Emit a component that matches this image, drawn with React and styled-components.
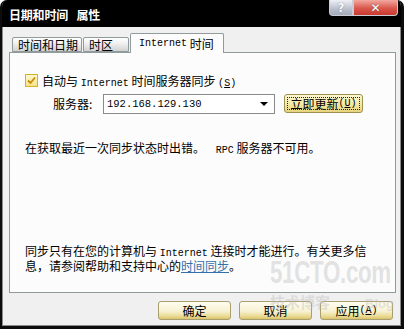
import React from "react";
import styled, { createGlobalStyle } from "styled-components";

const GlobalStyle = createGlobalStyle`
  html, body {
    margin: 0;
    padding: 0;
    background: #ffffff;
  }
  body {
    font-family: "Noto Sans CJK SC", "Liberation Sans", sans-serif;
    font-size: 12px;
    color: #000;
  }
`;

const Window = styled.div`
  position: relative;
  width: 404px;
  height: 329px;
  box-sizing: border-box;
  display: flex;
  flex-direction: column;
  background: #f0f0f0;
  border: 2px solid #0c0c0c;
  border-right-width: 3px;
  border-bottom-width: 3px;
  border-top: none;
  border-radius: 7px 7px 0 0;
  box-shadow: inset 1px 0 0 #8c8c8c, inset -1px -1px 0 #8c8c8c;
  overflow: hidden;
`;

const TitleBar = styled.div`
  height: 27px;
  flex-shrink: 0;
  display: flex;
  align-items: flex-start;
  background: #000;
  padding-left: 8px;
  margin: 0 -1px;
`;

const Title = styled.div`
  color: #fff;
  font-weight: 700;
  font-size: 12px;
  line-height: 12px;
  margin-top: 9px;
  letter-spacing: -0.2px;
  word-spacing: 6px;
`;

const CaptionButtons = styled.div`
  margin-left: auto;
  margin-right: 4px;
  display: flex;
`;

const CaptionButton = styled.div`
  width: ${(p) => p.w}px;
  height: 16px;
  box-sizing: border-box;
  display: flex;
  align-items: center;
  justify-content: center;
  color: #fff;
  font-family: "DejaVu Sans", sans-serif;
  font-weight: 700;
  font-size: 12px;
  border: 1px solid #c9ccd4;
  border-top: none;
  background: ${(p) =>
    p.close
      ? "linear-gradient(#f2a8a0, #d9574c 55%, #c8392f)"
      : "linear-gradient(#eef0f5, #b8bfcc 60%, #a3abbb)"};
  border-radius: ${(p) => (p.close ? "0 0 4px 0" : "0 0 0 4px")};
  text-shadow: 0 0 1px #555;
`;

const Body = styled.div`
  flex: 1;
  display: flex;
  flex-direction: column;
  padding: 6px 5px 0 7px;
`;

const TabStrip = styled.div`
  display: flex;
  align-items: flex-end;
  height: 19px;
  padding-left: 3px;
  position: relative;
  z-index: 1;
`;

const Tab = styled.div`
  box-sizing: border-box;
  width: ${(p) => p.w}px;
  height: ${(p) => (p.active ? 20 : 15)}px;
  margin-right: 1px;
  margin-bottom: ${(p) => (p.active ? -1 : 0)}px;
  padding-left: ${(p) => (p.active ? 8 : 5)}px;
  display: flex;
  align-items: ${(p) => (p.active ? "flex-start" : "center")};
  padding-top: ${(p) => (p.active ? 3 : 0)}px;
  border: 1px solid #919b9c;
  border-bottom: ${(p) => (p.active ? "none" : "1px solid #919b9c")};
  border-radius: 2px 2px 0 0;
  background: ${(p) =>
    p.active ? "#fcfcfc" : "linear-gradient(#ffffff, #f1f1f1 40%, #d2d2d2)"};
  font-size: 12px;
  line-height: 13px;
  white-space: nowrap;
`;

const Latin = styled.span`
  font-family: "Liberation Mono", monospace;
  font-size: 10px;
`;

const Panel = styled.div`
  width: 387px;
  height: 241px;
  box-sizing: border-box;
  background: #fcfcfc;
  border: 1px solid #919b9c;
  display: flex;
  flex-direction: column;
  padding: 0 15px 20px 15px;
`;

const CheckRow = styled.div`
  display: flex;
  align-items: center;
  height: 18px;
  margin-top: 18px;
  gap: 4px;
`;

const CheckBox = styled.div`
  width: 13px;
  height: 13px;
  box-sizing: border-box;
  border: 1px solid #d6b12a;
  background: linear-gradient(#fff8cf, #f5e48a);
  display: flex;
  align-items: center;
  justify-content: center;
`;

const Mnemonic = styled.span`
  font-family: "Liberation Mono", monospace;
  font-size: 10px;
  & u {
    text-decoration: underline;
  }
`;

const ServerRow = styled.div`
  display: flex;
  align-items: center;
  height: 21px;
  margin-top: 4px;
  padding-left: 28px;
`;

const FieldLabel = styled.span`
  width: 50px;
  flex-shrink: 0;
`;

const Combo = styled.div`
  width: 172px;
  height: 20px;
  box-sizing: border-box;
  border: 1px solid #8a8a8a;
  background: #fff;
  display: flex;
  align-items: center;
  padding: 0 6px 0 3px;
  font-family: "Liberation Mono", monospace;
  font-size: 10.5px;
`;

const Arrow = styled.div`
  margin-left: auto;
  width: 0;
  height: 0;
  border-left: 4px solid transparent;
  border-right: 4px solid transparent;
  border-top: 4px solid #000;
`;

const Button = styled.button`
  position: relative;
  width: ${(p) => p.w || 73}px;
  height: 19px;
  box-sizing: border-box;
  margin: 0;
  padding: 0;
  display: flex;
  align-items: center;
  justify-content: center;
  border: 1px solid ${(p) => (p.focus ? "#9c9050" : "#a89e70")};
  border-radius: 3px;
  background: ${(p) =>
    p.focus
      ? "linear-gradient(#fdf8d2, #f4e8a2 55%, #e6d47c)"
      : "linear-gradient(#fffdf0, #f7f1d2 55%, #e9d98f 85%, #d9c36a)"};
  font-family: "Noto Sans CJK SC", sans-serif;
  font-size: 12px;
  color: #000;
  &::after {
    content: "";
    display: ${(p) => (p.focus ? "block" : "none")};
    position: absolute;
    inset: 2px;
    border: 1px dotted #222;
  }
`;

const RefreshButton = styled(Button)`
  margin-left: 9px;
`;

const Status = styled.div`
  margin-top: 27px;
  line-height: 14px;
  white-space: pre;
`;

const Note = styled.div`
  margin-top: auto;
  line-height: 12px;
`;

const Link = styled.span`
  color: #3370a8;
  text-decoration: underline;
`;

const Footer = styled.div`
  display: flex;
  justify-content: flex-end;
  gap: 8px;
  padding: 8px 3px 0 0;
`;

const Watermark = styled.div`
  position: absolute;
  left: 268px;
  top: 256px;
  width: 124px;
  pointer-events: none;
  color: rgba(185, 185, 185, 0.4);
  font-weight: 700;
  line-height: 1;
  white-space: nowrap;
`;

const WatermarkBig = styled.div`
  display: inline-block;
  font-family: "Liberation Sans", sans-serif;
  font-size: 32px;
  letter-spacing: -0.5px;
  transform: scaleX(0.7);
  transform-origin: left top;
`;

const WatermarkSmall = styled.div`
  display: flex;
  align-items: baseline;
  justify-content: space-between;
  margin-top: 6px;
  font-family: "Noto Sans CJK SC", sans-serif;
  font-size: 15px;
`;

const WatermarkBlog = styled.span`
  font-family: "Liberation Sans", sans-serif;
  font-size: 13px;
`;

export default function App() {
  return (
    <>
      <GlobalStyle />
      <Window>
        <TitleBar>
          <Title>日期和时间 属性</Title>
          <CaptionButtons>
            <CaptionButton w={24}>?</CaptionButton>
            <CaptionButton w={45} close>
              ✕
            </CaptionButton>
          </CaptionButtons>
        </TitleBar>
        <Body>
          <TabStrip>
            <Tab w={70}>时间和日期</Tab>
            <Tab w={46}>时区</Tab>
            <Tab w={94} active>
              <Latin>Internet</Latin>&nbsp;时间
            </Tab>
          </TabStrip>
          <Panel>
            <CheckRow>
              <CheckBox>
                <svg width="9" height="9" viewBox="0 0 9 9">
                  <path d="M1 4.5 L3.5 7 L8 1.5" fill="none" stroke="#c98a00" strokeWidth="1.8" />
                </svg>
              </CheckBox>
              <span>
                自动与 <Latin>Internet</Latin> 时间服务器同步 <Mnemonic>(<u>S</u>)</Mnemonic>
              </span>
            </CheckRow>
            <ServerRow>
              <FieldLabel>服务器:</FieldLabel>
              <Combo>
                192.168.129.130
                <Arrow />
              </Combo>
              <RefreshButton w={79} focus>
                立即更新 <Mnemonic>(<u>U</u>)</Mnemonic>
              </RefreshButton>
            </ServerRow>
            <Status>
              在获取最近一次同步状态时出错。    <Latin>RPC</Latin> 服务器不可用。
            </Status>
            <Note>
              同步只有在您的计算机与 <Latin>Internet</Latin> 连接时才能进行。有关更多信
              <br />
              息，请参阅帮助和支持中心的<Link>时间同步</Link>。
            </Note>
          </Panel>
          <Footer>
            <Button>确定</Button>
            <Button>取消</Button>
            <Button>
              应用<Mnemonic>(<u>A</u>)</Mnemonic>
            </Button>
          </Footer>
        </Body>
        <Watermark>
          <WatermarkBig>51CTO.com</WatermarkBig>
          <WatermarkSmall>
            <span>技术博客</span>
            <WatermarkBlog>Blog</WatermarkBlog>
          </WatermarkSmall>
        </Watermark>
      </Window>
    </>
  );
}
